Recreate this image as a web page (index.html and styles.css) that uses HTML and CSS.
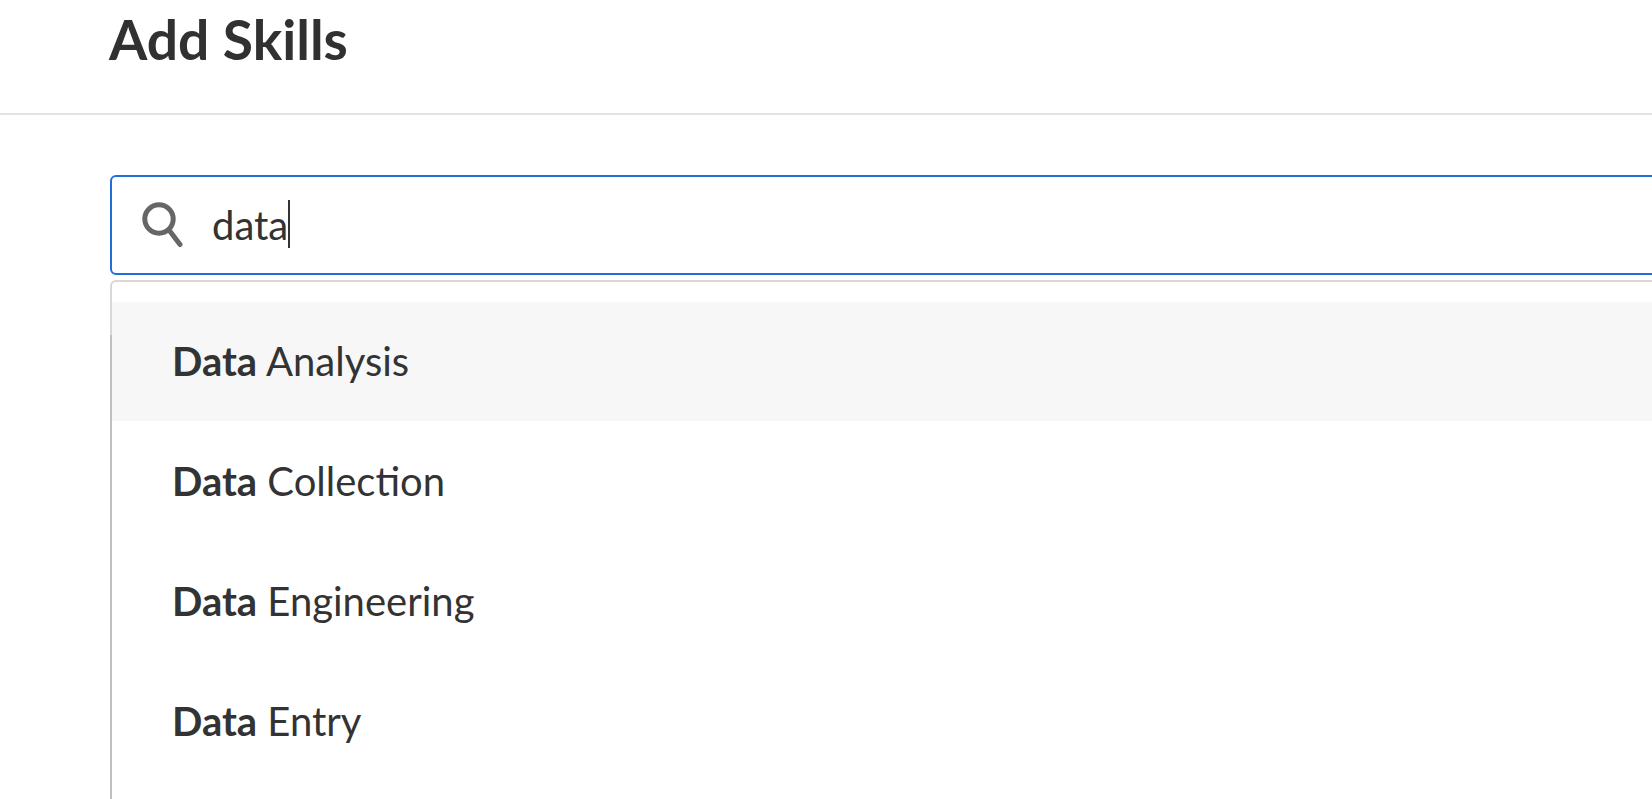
FILE: index.html
```html
<!DOCTYPE html>
<html lang="en">
<head>
<meta charset="utf-8">
<title>Add Skills</title>
<link rel="stylesheet" href="styles.css">
</head>
<body>
<header class="page-header"><h1 class="title">Add Skills</h1></header>
<main class="content">
  <div class="search">
    <svg class="search-icon" viewBox="0 0 42 46" width="42" height="46" aria-hidden="true">
      <circle cx="17" cy="17" r="14.2" fill="none" stroke="#666" stroke-width="5"/>
      <path d="M27 28 L38 42.5" fill="none" stroke="#666" stroke-width="5" stroke-linecap="round"/>
    </svg>
    <span class="query">data</span><span class="caret"></span>
  </div>
  <ul class="results">
    <li class="result is-active"><b>Data</b> Analysis</li>
    <li class="result"><b>Data</b> Collection</li>
    <li class="result"><b>Data</b> Engineering</li>
    <li class="result"><b>Data</b> Entry</li>
  </ul>
</main>
</body>
</html>
```
FILE: styles.css
```css
html, body { margin: 0; padding: 0; height: 100%; overflow: hidden; background: #fff; }
body { font-family: Lato, "Open Sans", sans-serif; color: #333; }
.page-header { height: 113px; border-bottom: 2px solid #e3e3e3; padding-left: 109px; overflow: hidden; }
.title { margin: 8px 0 0; font-size: 55.2px; line-height: 62px; font-weight: 700; color: #313131; }
.content { height: 684px; box-sizing: border-box; padding: 60px 0 0 110px; overflow: hidden; }
.search { height: 100px; box-sizing: border-box; margin-right: -20px; border: 2px solid #1f6fd8; border-radius: 6px; display: flex; align-items: center; padding-left: 30px; }
.search-icon { flex: none; margin-right: 28px; margin-top: -1px; }
.query { font-size: 40px; line-height: 46px; color: #333; }
.caret { width: 2px; height: 48px; background: #333; margin-top: -2px; }
.results { position: relative; list-style: none; margin: 5px -20px 0 0; padding: 20px 0 0; height: 498px; border: 2px solid #d8d8d8; border-bottom: 0; border-radius: 6px 6px 0 0; }
.results::before { content: ""; position: absolute; left: -2px; top: 53px; bottom: 0; width: 2px; background: #bfbfc4; }
.result { height: 120px; box-sizing: border-box; padding-bottom: 2px; display: flex; align-items: center; padding-left: 60px; font-size: 40px; white-space: pre; }
.result b { font-weight: 700; }
.is-active { height: 119px; margin-bottom: 1px; padding-bottom: 1px; background: #f7f7f7; }
```
